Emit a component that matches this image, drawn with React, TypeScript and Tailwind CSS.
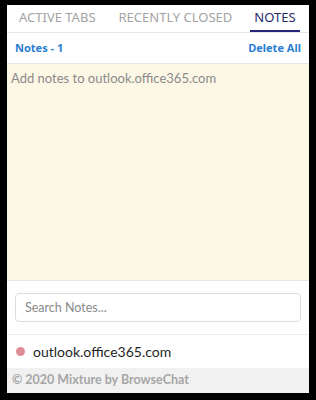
export default function App() {
  return (
    <div className="h-[400px] w-[316px] bg-black pl-[7px] pt-[5px] font-['Lato',sans-serif]">
      <div className="flex h-[388px] w-[302px] flex-col bg-white">
        <div className="flex h-[28px] items-start whitespace-nowrap border-b border-[#e6e6e6] font-['Noto_Sans',sans-serif] text-[13px] leading-[24px]">
          <div className="ml-[12px] text-[#a3a3a3]">ACTIVE TABS</div>
          <div className="ml-[23px] text-[#a3a3a3]">RECENTLY CLOSED</div>
          <div className="ml-[18px] h-[27px] border-b-2 border-[#25257a] px-[4px] text-[#2b2b6b]">NOTES</div>
        </div>
        <div className="flex h-[31px] items-center justify-between border-b border-[#e6e6e6] px-[8px] font-['Noto_Sans',sans-serif] text-[11px] font-bold text-[#2a7ed3]">
          <span>Notes - 1</span>
          <span>Delete All</span>
        </div>
        <textarea
          className="h-[216px] w-full resize-none bg-[#fdf8e6] px-[4px] py-[5px] text-[13px] text-[#555] placeholder:text-[#8a8a8a] focus:outline-none"
          placeholder="Add notes to outlook.office365.com"
        />
        <div className="border-t border-[#e6e6e6] px-[8px] py-[12px]">
          <input
            className="h-[29px] w-full rounded-[4px] border border-[#dcdcdc] px-[9px] text-[12.5px] placeholder:text-[#8a8a8a] focus:outline-none"
            placeholder="Search Notes..."
          />
        </div>
        <div className="flex h-[34px] items-center border-t border-[#ececec] px-[9px] text-[14px] text-[#1f1f1f]">
          <span className="mr-[8px] h-[9px] w-[9px] rounded-full bg-[#e08e96]" />
          outlook.office365.com
        </div>
        <div className="flex flex-1 items-center bg-[#f1f1f1] px-[5px] text-[12.5px] font-bold text-[#a6a6a6]">
          © 2020 Mixture by BrowseChat
        </div>
      </div>
    </div>
  );
}
